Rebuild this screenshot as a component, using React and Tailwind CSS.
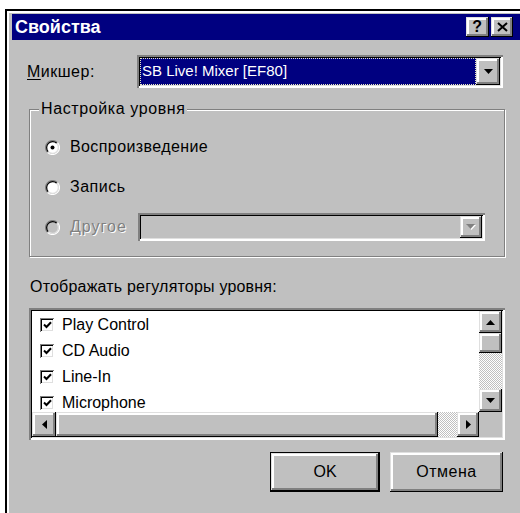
import React from "react"

// classic 3D bevels
const raised =
  "bg-[#c0c0c0] shadow-[inset_-1px_-1px_0_#000,inset_1px_1px_0_#dfdfdf,inset_-3px_-3px_0_#808080,inset_3px_3px_0_#fff]"
const sunken =
  "shadow-[inset_2px_2px_0_#808080,inset_-2px_-2px_0_#fff,inset_3px_3px_0_#000,inset_-3px_-3px_0_#dfdfdf]"
const dither = "bg-[conic-gradient(#fff_25%,#c0c0c0_0_50%,#fff_0_75%,#c0c0c0_0)] bg-[length:2px_2px]"

const Arrow = ({ dir = "down", color = "#000" }) => {
  const pts = {
    down: "0,0 9,0 4.5,5",
    up: "0,5 9,5 4.5,0",
    left: "5,0 5,9 0,4.5",
    right: "0,0 0,9 5,4.5",
  }[dir]
  const vertical = dir === "down" || dir === "up"
  return (
    <svg width={vertical ? 9 : 5} height={vertical ? 5 : 9} viewBox={vertical ? "0 0 9 5" : "0 0 5 9"}>
      <polygon points={pts} fill={color} />
    </svg>
  )
}

const Radio = ({ checked, disabled }) => (
  <svg width="15" height="15" viewBox="0 0 15 15" className="shrink-0">
    <circle cx="7.5" cy="7.5" r="6" fill={disabled ? "#c0c0c0" : "#fff"} />
    <path d="M2.55 12.45 A7 7 0 0 1 12.45 2.55" stroke="#808080" strokeWidth="1.2" fill="none" />
    <path d="M12.45 2.55 A7 7 0 0 1 2.55 12.45" stroke="#fff" strokeWidth="1.2" fill="none" />
    <path d="M3.26 11.74 A6 6 0 0 1 11.74 3.26" stroke="#000" strokeWidth="1.2" fill="none" />
    <path d="M11.74 3.26 A6 6 0 0 1 3.26 11.74" stroke="#dfdfdf" strokeWidth="1.2" fill="none" />
    {checked && <circle cx="7.5" cy="7.5" r="2" fill="#000" />}
  </svg>
)

const Check = () => (
  <div className="w-[14px] h-[14px] bg-white shrink-0 flex items-center justify-center shadow-[inset_1px_1px_0_#808080,inset_-1px_-1px_0_#fff,inset_2px_2px_0_#000,inset_-2px_-2px_0_#dfdfdf]">
    <svg width="9" height="8" viewBox="0 0 9 8">
      <polyline points="1,3.5 3.5,6 8,1.2" stroke="#000" strokeWidth="2" fill="none" />
    </svg>
  </div>
)

const channels = ["Play Control", "CD Audio", "Line-In", "Microphone"]

export default function App() {
  return (
    <div className="w-[520px] h-[513px] overflow-hidden bg-white pt-[9px] pl-[5px] font-['Liberation_Sans',Arial,sans-serif] text-[16px] tracking-[0.5px] text-black">
      <div className="w-[519px] h-[520px] border-t-2 border-l-2 border-black">
        <div className="h-full border-t-2 border-l-2 border-white bg-[#c0c0c0] pt-px pl-[3px]">
          {/* title bar */}
          <div className="h-[26px] bg-[#000080] flex items-center pl-[3px] pr-[11px]">
            <span className="flex-1 text-white font-bold text-[18px] tracking-normal leading-none">Свойства</span>
            <div className="flex gap-[2px]">
              <div className={`w-[23px] h-[20px] ${raised} flex items-center justify-center font-bold text-[16px] leading-none pb-px`}>?</div>
              <div className={`w-[22px] h-[20px] ${raised} flex items-center justify-center`}>
                <svg width="11" height="10" viewBox="0 0 11 10">
                  <path d="M1 1 L10 9 M10 1 L1 9" stroke="#000" strokeWidth="2" />
                </svg>
              </div>
            </div>
          </div>

          <div className="flex flex-col w-[493px]">
            {/* mixer */}
            <div className="mt-[15px] pl-[15px] flex items-center">
              <span className="w-[110px]">
                <span className="underline underline-offset-2">М</span>икшер:
              </span>
              <div className={`w-[366px] h-[33px] bg-white ${sunken} p-[3px] flex`}>
                <div className="flex-1 bg-[#000080] border border-dotted border-[#e8e8c0] text-white text-[15px] tracking-normal flex items-center pl-px">
                  SB Live! Mixer [EF80]
                </div>
                <div className={`w-[24px] ${raised} flex items-center justify-center`}>
                  <Arrow />
                </div>
              </div>
            </div>

            {/* level setting group */}
            <div className="relative mt-[21px] ml-[17px] w-[476px] h-[148px] border border-[#808080] shadow-[1px_1px_0_#fff,inset_1px_1px_0_#fff]">
              <span className="absolute -top-[10px] left-[9px] px-[2px] bg-[#c0c0c0] leading-[18px] tracking-[0.6px]">Настройка уровня</span>
              <div className="flex flex-col gap-[12px] pt-[23px] pl-[15px]">
                <div className="h-[28px] flex items-center gap-[10px]">
                  <Radio checked />
                  <span className="tracking-[0.4px]">Воспроизведение</span>
                </div>
                <div className="h-[28px] flex items-center gap-[10px]">
                  <Radio />
                  <span>Запись</span>
                </div>
                <div className="h-[28px] flex items-center">
                  <div className="w-[93px] flex items-center gap-[10px]">
                    <Radio disabled />
                    <span className="text-[#808080] tracking-[1px] [text-shadow:1px_1px_0_#fff]">Другое</span>
                  </div>
                  <div className={`w-[347px] h-[28px] bg-[#c0c0c0] ${sunken} p-[3px] flex justify-end`}>
                    <div className={`w-[22px] ${raised} flex items-center justify-center`}>
                      <svg width="10" height="6" viewBox="0 0 10 6">
                        <polygon points="1,1 10,1 5.5,6" fill="#fff" />
                        <polygon points="0,0 9,0 4.5,5" fill="#808080" />
                      </svg>
                    </div>
                  </div>
                </div>
              </div>
            </div>

            {/* shown controls */}
            <div className="mt-[21px] ml-[18px] leading-[18px] tracking-[0.2px]">Отображать регуляторы уровня:</div>

            <div className={`mt-[12px] ml-[17px] w-[476px] h-[132px] bg-white ${sunken} p-[3px]`}>
              <div className="h-full grid grid-cols-[1fr_23px] grid-rows-[1fr_25px]">
                <div className="overflow-hidden pt-px tracking-normal">
                  {channels.map((name) => (
                    <div key={name} className="h-[26px] flex items-center gap-[8px] pl-[8px]">
                      <Check />
                      <span>{name}</span>
                    </div>
                  ))}
                </div>
                <div className="flex flex-col">
                  <div className={`h-[22px] ${raised} flex items-center justify-center`}>
                    <Arrow dir="up" />
                  </div>
                  <div className={`h-[20px] ${raised}`} />
                  <div className={`flex-1 ${dither}`} />
                  <div className={`h-[23px] ${raised} flex items-center justify-center`}>
                    <Arrow dir="down" />
                  </div>
                </div>
                <div className="flex">
                  <div className={`w-[24px] ${raised} flex items-center justify-center`}>
                    <Arrow dir="left" />
                  </div>
                  <div className={`w-[382px] ${raised}`} />
                  <div className={`flex-1 ${dither}`} />
                  <div className={`w-[22px] ${raised} flex items-center justify-center`}>
                    <Arrow dir="right" />
                  </div>
                </div>
                <div className="bg-[#c0c0c0]" />
              </div>
            </div>

            {/* dialog buttons */}
            <div className="mt-[12px] pr-[2px] flex justify-end gap-[10px]">
              <button className="w-[110px] h-[40px] border border-black">
                <div className={`h-full ${raised} flex items-center justify-center tracking-normal`}>OK</div>
              </button>
              <button className={`w-[113px] h-[40px] ${raised} flex items-center justify-center`}>Отмена</button>
            </div>
          </div>
        </div>
      </div>
    </div>
  )
}
